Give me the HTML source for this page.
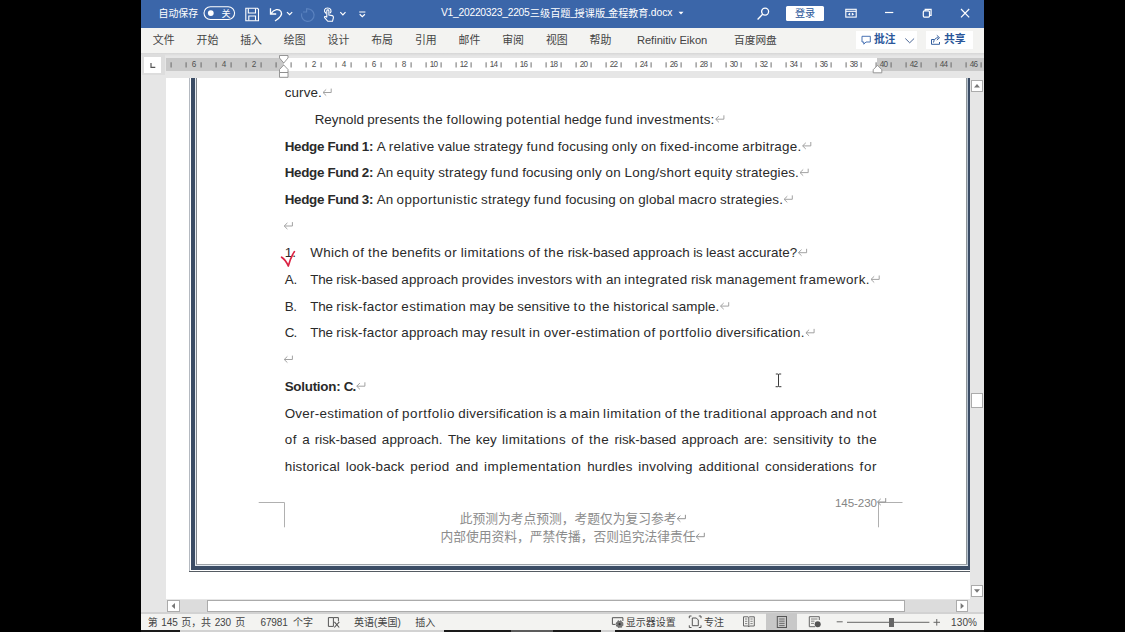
<!DOCTYPE html>
<html><head><meta charset="utf-8"><title>Word</title><style>
html,body{margin:0;padding:0;background:#000;}
body{width:1125px;height:632px;position:relative;overflow:hidden;font-family:"Liberation Sans",sans-serif;}
body>div{position:absolute;}
.t{white-space:pre;}
.bl{font-size:13.4px;line-height:19px;color:#2a2a2a;}
.bl span{display:inline-block;white-space:pre;word-spacing:0;}
.rn{font-size:8.2px;line-height:10px;text-align:center;color:#505050;letter-spacing:-0.8px;text-indent:-0.8px;}
svg{position:absolute;left:0;top:0;}
svg text{font-family:"Liberation Sans","Noto Sans CJK SC",sans-serif;}
</style></head>
<body>
<div style="left:141px;top:0px;width:843px;height:27.7px;background:#3b66a9;"></div>
<div style="left:141px;top:27.7px;width:843px;height:25.3px;background:#f3f3f1;"></div>
<div style="left:141px;top:53px;width:843px;height:559px;background:#e6e6e6;"></div>
<div style="left:141px;top:52.6px;width:843px;height:3.4px;background:#e6e6e6;background:linear-gradient(#d6d6d6,#e6e6e6);"></div>
<div style="left:166px;top:78px;width:804px;height:521px;background:#ffffff;"></div>
<div style="left:141px;top:612.5px;width:843px;height:19.5px;background:#f3f3f1;"></div>
<div style="left:141px;top:612px;width:843px;height:1.6px;background:#d2d2d2;"></div>
<div style="left:142px;top:53.6px;width:23px;height:21.6px;background:#dddddd;"></div>
<div style="left:144px;top:57px;width:17px;height:16px;background:#ffffff;"></div>
<div style="left:166px;top:58px;width:818px;height:12.6px;background:#c9c9c9;"></div>
<div style="left:283.6px;top:58px;width:593.4px;height:12.6px;background:#ffffff;"></div>
<div class="rn" style="left:184px;top:60.3px;width:20px">6</div>
<div class="rn" style="left:214px;top:60.3px;width:20px">4</div>
<div class="rn" style="left:244px;top:60.3px;width:20px">2</div>
<div class="rn" style="left:304px;top:60.3px;width:20px">2</div>
<div class="rn" style="left:334px;top:60.3px;width:20px">4</div>
<div class="rn" style="left:364px;top:60.3px;width:20px">6</div>
<div class="rn" style="left:394px;top:60.3px;width:20px">8</div>
<div class="rn" style="left:424px;top:60.3px;width:20px">10</div>
<div class="rn" style="left:454px;top:60.3px;width:20px">12</div>
<div class="rn" style="left:484px;top:60.3px;width:20px">14</div>
<div class="rn" style="left:514px;top:60.3px;width:20px">16</div>
<div class="rn" style="left:544px;top:60.3px;width:20px">18</div>
<div class="rn" style="left:574px;top:60.3px;width:20px">20</div>
<div class="rn" style="left:604px;top:60.3px;width:20px">22</div>
<div class="rn" style="left:634px;top:60.3px;width:20px">24</div>
<div class="rn" style="left:664px;top:60.3px;width:20px">26</div>
<div class="rn" style="left:694px;top:60.3px;width:20px">28</div>
<div class="rn" style="left:724px;top:60.3px;width:20px">30</div>
<div class="rn" style="left:754px;top:60.3px;width:20px">32</div>
<div class="rn" style="left:784px;top:60.3px;width:20px">34</div>
<div class="rn" style="left:814px;top:60.3px;width:20px">36</div>
<div class="rn" style="left:844px;top:60.3px;width:20px">38</div>
<div class="rn" style="left:874px;top:60.3px;width:20px">40</div>
<div class="rn" style="left:904px;top:60.3px;width:20px">42</div>
<div class="rn" style="left:934px;top:60.3px;width:20px">44</div>
<div class="rn" style="left:964px;top:60.3px;width:20px">46</div>
<div style="left:189.3px;top:78px;width:1px;height:494px;background:#b4b9c0;"></div>
<div style="left:191.2px;top:78px;width:3.7px;height:491.7px;background:#3b4c65;"></div>
<div style="left:194.9px;top:78px;width:1.2px;height:488.2px;background:#e6ebf1;"></div>
<div style="left:196.1px;top:78px;width:1px;height:487px;background:#80858b;"></div>
<div style="left:965.8px;top:78px;width:1px;height:487px;background:#8e9599;"></div>
<div style="left:966.8px;top:78px;width:1.2px;height:488.2px;background:#b4c1cf;"></div>
<div style="left:968px;top:78px;width:2px;height:491.7px;background:#3b4c65;"></div>
<div style="left:196.1px;top:564.1px;width:770.7px;height:0.9px;background:#9da2a7;"></div>
<div style="left:194.9px;top:565px;width:773.1px;height:1.2px;background:#e3e9f0;"></div>
<div style="left:191.2px;top:566.2px;width:778.8px;height:3.5px;background:#3b4c65;"></div>
<div style="left:189.3px;top:571px;width:780.7px;height:1px;background:#565c63;"></div>
<div style="left:970px;top:78px;width:14px;height:534px;background:#e6e6e6;"></div>
<div style="left:971px;top:80px;width:12px;height:12px;background:#ffffff;box-sizing:border-box;border:1px solid #ababab;"></div>
<div style="left:971px;top:585px;width:12px;height:12px;background:#ffffff;box-sizing:border-box;border:1px solid #ababab;"></div>
<div style="left:971px;top:393px;width:12px;height:14.5px;background:#ffffff;box-sizing:border-box;border:1px solid #ababab;"></div>
<div style="left:166px;top:599px;width:804px;height:13px;background:#e6e6e6;"></div>
<div style="left:180px;top:600px;width:776px;height:12px;background:#dcdcdc;"></div>
<div style="left:167px;top:600px;width:13px;height:12px;background:#ffffff;box-sizing:border-box;border:1px solid #ababab;"></div>
<div style="left:956px;top:600px;width:12px;height:12px;background:#ffffff;box-sizing:border-box;border:1px solid #ababab;"></div>
<div style="left:207px;top:600px;width:698px;height:12px;background:#ffffff;box-sizing:border-box;border:1px solid #ababab;"></div>
<div style="left:786.2px;top:5.7px;width:38px;height:15.6px;background:#ffffff;border-radius:1.5px;"></div>
<div style="left:855.6px;top:31.1px;width:61.6px;height:17.8px;background:#ffffff;"></div>
<div style="left:925.7px;top:31.1px;width:47.5px;height:17.8px;background:#ffffff;"></div>
<div style="left:766px;top:613px;width:31.3px;height:19px;background:#c8c8c8;"></div>
<div style="left:889.3px;top:618px;width:4.5px;height:9.3px;background:#666;"></div>
<div style="left:141px;top:629.9px;width:39px;height:2.1px;background:#1a1a1a;"></div>
<div style="left:180px;top:630.3px;width:264px;height:1.7px;background:#d2d2d2;"></div>
<div style="left:444px;top:629.9px;width:157px;height:2.1px;background:#1a1a1a;"></div>
<div style="left:511px;top:629.9px;width:42px;height:2.1px;background:#5c5c5c;"></div>
<div style="left:601px;top:630.3px;width:14px;height:1.7px;background:#d2d2d2;"></div>
<div style="left:615px;top:629.9px;width:369px;height:2.1px;background:#1a1a1a;"></div>
<div class="t bl" style="left:284.7px;top:83.16px;word-spacing:-0.350px"><span style="width:37.23px;letter-spacing:0.127px;">curve.</span></div>
<div class="t bl" style="left:314.7px;top:109.86px;word-spacing:-0.350px"><span style="width:49.18px;letter-spacing:0.006px;">Reynold</span> <span style="width:52.32px;letter-spacing:0.121px;">presents</span> <span style="width:20.23px;letter-spacing:0.536px;">the</span> <span style="width:56.01px;letter-spacing:0.434px;">following</span> <span style="width:54.89px;letter-spacing:0.472px;">potential</span> <span style="width:37.50px;letter-spacing:0.049px;">hedge</span> <span style="width:28.03px;letter-spacing:0.492px;">fund</span> <span style="width:78.16px;letter-spacing:0.249px;">investments:</span></div>
<div class="t bl" style="left:284.7px;top:136.56px;word-spacing:-0.350px"><span style="width:39.46px;letter-spacing:-0.295px;font-weight:700;">Hedge</span> <span style="width:30.83px;letter-spacing:-0.473px;font-weight:700;">Fund</span> <span style="width:11.66px;letter-spacing:-0.130px;font-weight:700;">1:</span> <span style="width:8.62px;letter-spacing:-0.316px;">A</span> <span style="width:45.72px;letter-spacing:0.318px;">relative</span> <span style="width:32.53px;letter-spacing:0.103px;">value</span> <span style="width:49.31px;letter-spacing:0.209px;">strategy</span> <span style="width:28.03px;letter-spacing:0.492px;">fund</span> <span style="width:50.62px;letter-spacing:0.093px;">focusing</span> <span style="width:25.85px;letter-spacing:0.318px;">only</span> <span style="width:15.69px;letter-spacing:0.390px;">on</span> <span style="width:78.95px;letter-spacing:0.252px;">fixed-income</span> <span style="width:59.09px;letter-spacing:0.251px;">arbitrage.</span></div>
<div class="t bl" style="left:284.7px;top:163.26px;word-spacing:-0.350px"><span style="width:39.46px;letter-spacing:-0.295px;font-weight:700;">Hedge</span> <span style="width:30.83px;letter-spacing:-0.473px;font-weight:700;">Fund</span> <span style="width:11.66px;letter-spacing:-0.130px;font-weight:700;">2:</span> <span style="width:16.45px;letter-spacing:0.030px;">An</span> <span style="width:38.22px;letter-spacing:0.415px;">equity</span> <span style="width:49.31px;letter-spacing:0.209px;">strategy</span> <span style="width:28.03px;letter-spacing:0.492px;">fund</span> <span style="width:50.62px;letter-spacing:0.093px;">focusing</span> <span style="width:25.85px;letter-spacing:0.318px;">only</span> <span style="width:15.69px;letter-spacing:0.390px;">on</span> <span style="width:66.42px;letter-spacing:0.314px;">Long/short</span> <span style="width:38.22px;letter-spacing:0.415px;">equity</span> <span style="width:62.99px;letter-spacing:0.110px;">strategies.</span></div>
<div class="t bl" style="left:284.7px;top:189.96px;word-spacing:-0.350px"><span style="width:39.46px;letter-spacing:-0.295px;font-weight:700;">Hedge</span> <span style="width:30.83px;letter-spacing:-0.473px;font-weight:700;">Fund</span> <span style="width:11.66px;letter-spacing:-0.130px;font-weight:700;">3:</span> <span style="width:16.45px;letter-spacing:0.030px;">An</span> <span style="width:81.17px;letter-spacing:0.403px;">opportunistic</span> <span style="width:49.31px;letter-spacing:0.209px;">strategy</span> <span style="width:28.03px;letter-spacing:0.492px;">fund</span> <span style="width:50.62px;letter-spacing:0.093px;">focusing</span> <span style="width:15.69px;letter-spacing:0.390px;">on</span> <span style="width:36.68px;letter-spacing:0.154px;">global</span> <span style="width:38.39px;letter-spacing:0.235px;">macro</span> <span style="width:62.99px;letter-spacing:0.110px;">strategies.</span></div>
<div class="t bl" style="left:284.7px;top:243.36px;word-spacing:-0.350px"><span style="width:11.31px;letter-spacing:0.071px;">1.</span></div>
<div class="t bl" style="left:310.3px;top:243.36px;word-spacing:-0.350px"><span style="width:38.63px;letter-spacing:0.283px;">Which</span> <span style="width:12.40px;letter-spacing:0.616px;">of</span> <span style="width:20.23px;letter-spacing:0.536px;">the</span> <span style="width:49.27px;letter-spacing:0.295px;">benefits</span> <span style="width:13.05px;letter-spacing:0.565px;">or</span> <span style="width:64.21px;letter-spacing:0.424px;">limitations</span> <span style="width:12.40px;letter-spacing:0.616px;">of</span> <span style="width:20.23px;letter-spacing:0.536px;">the</span> <span style="width:61.81px;letter-spacing:0.003px;">risk-based</span> <span style="width:57.11px;letter-spacing:0.159px;">approach</span> <span style="width:9.25px;letter-spacing:-0.212px;">is</span> <span style="width:28.79px;letter-spacing:0.098px;">least</span> <span style="width:59.21px;letter-spacing:0.044px;">accurate?</span></div>
<div class="t bl" style="left:284.7px;top:270.06px;word-spacing:-0.350px"><span style="width:12.38px;letter-spacing:-0.137px;">A.</span></div>
<div class="t bl" style="left:310.3px;top:270.06px;word-spacing:-0.350px"><span style="width:22.50px;letter-spacing:-0.192px;">The</span> <span style="width:61.81px;letter-spacing:0.003px;">risk-based</span> <span style="width:57.11px;letter-spacing:0.159px;">approach</span> <span style="width:52.10px;letter-spacing:0.184px;">provides</span> <span style="width:55.09px;letter-spacing:0.166px;">investors</span> <span style="width:26.89px;letter-spacing:0.765px;">with</span> <span style="width:14.97px;letter-spacing:0.030px;">an</span> <span style="width:63.23px;letter-spacing:0.367px;">integrated</span> <span style="width:21.22px;letter-spacing:0.097px;">risk</span> <span style="width:80.57px;letter-spacing:0.240px;">management</span> <span style="width:70.43px;letter-spacing:0.420px;">framework.</span></div>
<div class="t bl" style="left:284.7px;top:296.76px;word-spacing:-0.350px"><span style="width:11.87px;letter-spacing:-0.395px;">B.</span></div>
<div class="t bl" style="left:310.3px;top:296.76px;word-spacing:-0.350px"><span style="width:22.50px;letter-spacing:-0.192px;">The</span> <span style="width:61.80px;letter-spacing:0.275px;">risk-factor</span> <span style="width:64.79px;letter-spacing:0.376px;">estimation</span> <span style="width:25.78px;letter-spacing:0.157px;">may</span> <span style="width:15.24px;letter-spacing:0.168px;">be</span> <span style="width:52.87px;letter-spacing:0.085px;">sensitive</span> <span style="width:12.85px;letter-spacing:0.838px;">to</span> <span style="width:20.23px;letter-spacing:0.536px;">the</span> <span style="width:55.39px;letter-spacing:0.255px;">historical</span> <span style="width:47.29px;letter-spacing:0.057px;">sample.</span></div>
<div class="t bl" style="left:284.7px;top:323.46px;word-spacing:-0.350px"><span style="width:11.71px;letter-spacing:-0.850px;">C.</span></div>
<div class="t bl" style="left:310.3px;top:323.46px;word-spacing:-0.350px"><span style="width:22.50px;letter-spacing:-0.192px;">The</span> <span style="width:61.80px;letter-spacing:0.275px;">risk-factor</span> <span style="width:57.11px;letter-spacing:0.159px;">approach</span> <span style="width:25.78px;letter-spacing:0.157px;">may</span> <span style="width:34.67px;letter-spacing:0.321px;">result</span> <span style="width:11.25px;letter-spacing:0.405px;">in</span> <span style="width:96.54px;letter-spacing:0.333px;">over-estimation</span> <span style="width:12.40px;letter-spacing:0.616px;">of</span> <span style="width:52.97px;letter-spacing:0.592px;">portfolio</span> <span style="width:89.09px;letter-spacing:0.266px;">diversification.</span></div>
<div class="t bl" style="left:284.7px;top:376.86px;word-spacing:-0.350px"><span style="width:55.65px;letter-spacing:-0.263px;font-weight:700;">Solution:</span> <span style="width:11.87px;letter-spacing:-0.770px;font-weight:700;">C.</span></div>
<div class="t bl" style="left:284.7px;top:403.56px;word-spacing:-0.508px"><span style="width:98.55px;letter-spacing:0.269px;">Over-estimation</span> <span style="width:12.40px;letter-spacing:0.616px;">of</span> <span style="width:52.97px;letter-spacing:0.592px;">portfolio</span> <span style="width:85.33px;letter-spacing:0.281px;">diversification</span> <span style="width:9.25px;letter-spacing:-0.212px;">is</span> <span style="width:7.14px;letter-spacing:-0.316px;">a</span> <span style="width:30.29px;letter-spacing:0.314px;">main</span> <span style="width:58.39px;letter-spacing:0.554px;">limitation</span> <span style="width:12.40px;letter-spacing:0.616px;">of</span> <span style="width:20.23px;letter-spacing:0.536px;">the</span> <span style="width:63.22px;letter-spacing:0.469px;">traditional</span> <span style="width:57.11px;letter-spacing:0.159px;">approach</span> <span style="width:22.79px;letter-spacing:0.150px;">and</span> <span style="width:20.68px;letter-spacing:0.684px;">not</span></div>
<div class="t bl" style="left:284.7px;top:430.26px;word-spacing:1.541px"><span style="width:12.40px;letter-spacing:0.616px;">of</span> <span style="width:7.14px;letter-spacing:-0.316px;">a</span> <span style="width:61.81px;letter-spacing:0.003px;">risk-based</span> <span style="width:60.87px;letter-spacing:0.146px;">approach.</span> <span style="width:22.50px;letter-spacing:-0.192px;">The</span> <span style="width:20.93px;letter-spacing:0.029px;">key</span> <span style="width:64.21px;letter-spacing:0.424px;">limitations</span> <span style="width:12.40px;letter-spacing:0.616px;">of</span> <span style="width:20.23px;letter-spacing:0.536px;">the</span> <span style="width:61.81px;letter-spacing:0.003px;">risk-based</span> <span style="width:57.11px;letter-spacing:0.159px;">approach</span> <span style="width:23.73px;letter-spacing:0.164px;">are:</span> <span style="width:60.61px;letter-spacing:0.233px;">sensitivity</span> <span style="width:12.85px;letter-spacing:0.838px;">to</span> <span style="width:20.23px;letter-spacing:0.536px;">the</span></div>
<div class="t bl" style="left:284.7px;top:456.96px;word-spacing:2.073px"><span style="width:55.39px;letter-spacing:0.255px;">historical</span> <span style="width:58.51px;letter-spacing:0.133px;">look-back</span> <span style="width:39.54px;letter-spacing:0.385px;">period</span> <span style="width:22.79px;letter-spacing:0.150px;">and</span> <span style="width:97.35px;letter-spacing:0.467px;">implementation</span> <span style="width:45.34px;letter-spacing:0.203px;">hurdles</span> <span style="width:54.25px;letter-spacing:0.237px;">involving</span> <span style="width:60.87px;letter-spacing:0.352px;">additional</span> <span style="width:88.73px;letter-spacing:0.169px;">considerations</span> <span style="width:17.60px;letter-spacing:0.653px;">for</span></div>
<div class="t" style="left:441px;top:6.03px;font-size:10.3px;line-height:14px;color:#ffffff;letter-spacing:-0.265px;">V1_20220323_2205</div>
<div class="t" style="left:570.4px;top:6.03px;font-size:10.3px;line-height:14px;color:#ffffff;">_</div>
<div class="t" style="left:605px;top:6.03px;font-size:10.3px;line-height:14px;color:#ffffff;">_</div>
<div class="t" style="left:648px;top:6.03px;font-size:10.3px;line-height:14px;color:#ffffff;letter-spacing:-0.031px;">.docx</div>
<div class="t" style="left:636.9px;top:32.42px;font-size:11.2px;line-height:16px;color:#444444;letter-spacing:-0.035px;">Refinitiv Eikon</div>
<div class="t" style="left:835px;top:494.58px;font-size:11.6px;line-height:16px;color:#858585;letter-spacing:-0.094px;">145-230</div>
<div class="t" style="left:161.3px;top:615.63px;font-size:10.0px;line-height:14px;color:#444444;letter-spacing:-0.144px;">145</div>
<div class="t" style="left:214.7px;top:615.63px;font-size:10.0px;line-height:14px;color:#444444;letter-spacing:-0.194px;">230</div>
<div class="t" style="left:260.6px;top:615.63px;font-size:10.0px;line-height:14px;color:#444444;letter-spacing:-0.178px;">67981</div>
<div class="t" style="left:374px;top:615.63px;font-size:10.0px;line-height:14px;color:#444444;">(</div>
<div class="t" style="left:397.6px;top:615.63px;font-size:10.0px;line-height:14px;color:#444444;">)</div>
<div class="t" style="left:951px;top:615.63px;font-size:10.0px;line-height:14px;color:#444444;letter-spacing:0.141px;">130%</div>
<svg width="1125" height="632" viewBox="0 0 1125 632">
<path d="M151 63V67.4H155.3" fill="none" stroke="#555" stroke-width="1.2"/>
<path stroke="#606060" stroke-width="0.9" d="M171.1 62.3V67.5M186.1 62.3V67.5M201.1 62.3V67.5M216.1 62.3V67.5M231.1 62.3V67.5M246.1 62.3V67.5M261.1 62.3V67.5M276.1 62.3V67.5M291.1 62.3V67.5M306.1 62.3V67.5M321.1 62.3V67.5M336.1 62.3V67.5M351.1 62.3V67.5M366.1 62.3V67.5M381.1 62.3V67.5M396.1 62.3V67.5M411.1 62.3V67.5M426.1 62.3V67.5M441.1 62.3V67.5M456.1 62.3V67.5M471.1 62.3V67.5M486.1 62.3V67.5M501.1 62.3V67.5M516.1 62.3V67.5M531.1 62.3V67.5M546.1 62.3V67.5M561.1 62.3V67.5M576.1 62.3V67.5M591.1 62.3V67.5M606.1 62.3V67.5M621.1 62.3V67.5M636.1 62.3V67.5M651.1 62.3V67.5M666.1 62.3V67.5M681.1 62.3V67.5M696.1 62.3V67.5M711.1 62.3V67.5M726.1 62.3V67.5M741.1 62.3V67.5M756.1 62.3V67.5M771.1 62.3V67.5M786.1 62.3V67.5M801.1 62.3V67.5M816.1 62.3V67.5M831.1 62.3V67.5M846.1 62.3V67.5M861.1 62.3V67.5M876.1 62.3V67.5M891.1 62.3V67.5M906.1 62.3V67.5M921.1 62.3V67.5M936.1 62.3V67.5M951.1 62.3V67.5M966.1 62.3V67.5M981.1 62.3V67.5"/>
<g fill="#fff" stroke="#858585" stroke-width="0.85"><path d="M279.5 55.5H288V58L283.75 63L279.5 58Z"/><path d="M283.75 65L288 69.5V72.5H279.5V69.5Z"/><path d="M279.5 72.5H288V77.3H279.5Z"/><path d="M877.5 65.3L881.8 69.7V72.8H873.2V69.7Z"/></g>
<path d="M974 87.5L977 84L980 87.5Z" fill="#777"/>
<path d="M974 589.3L977 592.8L980 589.3Z" fill="#777"/>
<path d="M175 602.9L171.6 606L175 609.1Z" fill="#777"/>
<path d="M960.6 602.9L964 606L960.6 609.1Z" fill="#777"/>
<text x="158.5" y="16.6" font-size="9.9" fill="#ffffff">自动保存</text>
<rect x="204" y="6.7" width="30.6" height="12.8" rx="6.4" fill="none" stroke="#fff" stroke-width="1.1"/><circle cx="210.8" cy="13.1" r="2.9" fill="#fff"/>
<text x="221.5" y="16.5" font-size="9" fill="#ffffff">关</text>
<g fill="none" stroke="#fff" stroke-width="1.1"><path d="M245.8 8.3H257.5L258.5 9.3V20.8H245.8Z"/><path d="M248.3 8.5V13H255.5V8.5"/><path d="M248.8 20.5V16H255.5V20.5"/></g>
<g fill="none" stroke="#fff" stroke-width="1.3"><path d="M270.5 8.3V14H276.2"/><path d="M270.8 13.8C274 9 279 8.5 281 11.5C283 15 279 18.5 275 21"/></g>
<path d="M287 12.1L289.6 14.7L292.2 12.1" fill="none" stroke="#fff" stroke-width="1.2"/>
<g fill="none" stroke="#5a82bf" stroke-width="1.2"><path d="M306.6 8.9A6.3 6.3 0 1 1 301.7 13.4"/><path d="M306.6 8.2V12H303"/></g>
<g fill="none" stroke="#fff" stroke-width="1.1"><path d="M326.3 13.5C323 11 324.5 8 327.5 8C331 8 332 11 330 13.2"/><path d="M326.8 17.5V10.8C326.8 9.6 328.9 9.6 328.9 10.8V15L332.2 15.6C333.4 15.9 333.6 17 333.3 18.2L332.5 21.3H327.8L324.6 17.6C324 16.6 325.4 15.8 326.8 17.5"/></g>
<path d="M340.3 12.2L342.9 14.8L345.5 12.2" fill="none" stroke="#fff" stroke-width="1.2"/>
<path d="M359.2 12H365.4M359.7 14.2L362.3 16.7L364.9 14.2" fill="none" stroke="#fff" stroke-width="1.2"/>
<text x="529.8" y="16.7" font-size="10.2" fill="#ffffff">三级百题</text>
<text x="574.6" y="16.7" font-size="10.2" fill="#ffffff">授课版</text>
<text x="608.3" y="16.7" font-size="10" fill="#ffffff">金程教育</text>
<path d="M678.5 11.8H683.5L681 14.6Z" fill="#fff"/>
<g fill="none" stroke="#fff" stroke-width="1.3"><circle cx="765.1" cy="11.6" r="3.5"/><path d="M762.6 14.2L757.6 19.5"/></g>
<text x="795" y="17.2" font-size="10.1" fill="#2b579a">登录</text>
<g fill="none" stroke="#fff" stroke-width="1.1"><rect x="845.8" y="9.3" width="10.4" height="7.8"/><path d="M845.8 11.3H856.2"/></g><path d="M847.8 14.2L850.2 12.6V15.8ZM854.2 14.2L851.8 12.6V15.8Z" fill="#fff"/>
<g fill="none" stroke="#fff" stroke-width="1.2"><path d="M885 12.5H893.3"/><rect x="923.3" y="10.9" width="6.2" height="6.2" rx="1"/><path d="M925.2 10.7V9.4H931.1V15.3H929.8"/><path d="M961 9L969.2 17.4M969.2 9L961 17.4"/></g>
<g fill="#444444" font-size="10.9">
<text x="152.8" y="44.4">文件</text>
<text x="196.5" y="44.4">开始</text>
<text x="240.2" y="44.4">插入</text>
<text x="283.8" y="44.4">绘图</text>
<text x="327.5" y="44.4">设计</text>
<text x="371.2" y="44.4">布局</text>
<text x="414.9" y="44.4">引用</text>
<text x="458.6" y="44.4">邮件</text>
<text x="502.2" y="44.4">审阅</text>
<text x="545.9" y="44.4">视图</text>
<text x="589.6" y="44.4">帮助</text>
</g>
<text x="734" y="44.4" font-size="10.7" fill="#444444">百度网盘</text>
<path d="M862 36.3H870.3V42H866L863.8 44.2V42H862Z" fill="none" stroke="#3f6cb0" stroke-width="0.95"/>
<text x="874" y="43.3" font-size="10.8" font-weight="700" fill="#2b579a">批注</text>
<path d="M905.3 38.5L909.7 42.8L914.1 38.5" fill="none" stroke="#4b6796" stroke-width="1"/>
<g fill="none" stroke="#2b579a" stroke-width="0.95"><path d="M934 39.5H931.5V44.3H939.5V42"/><path d="M933.5 42.5C934 39 936 37.7 938.3 37.7M936.8 35.3L939.5 37.7L936.8 40.2"/></g>
<text x="944" y="43.3" font-size="10.8" font-weight="700" fill="#2b579a">共享</text>
<g fill="none" stroke="#9d9d9d" stroke-width="0.95"><path d="M292.4 222.1V226H284.4"/><path d="M287.4 222.9L284.2 226L287.4 229.1"/></g>
<g fill="none" stroke="#9d9d9d" stroke-width="0.95"><path d="M292.4 355.6V359.5H284.4"/><path d="M287.4 356.4L284.2 359.5L287.4 362.6"/></g>
<path d="M281.6 257.2C284.5 259 286.8 262.5 288.3 266C289.8 260.5 291.8 255.5 294.4 251.6" fill="none" stroke="#db2243" stroke-width="1.7" stroke-linecap="round" stroke-linejoin="round"/>
<path d="M775.8 374H777.8Q778.5 374 778.5 375V385.7Q778.5 386.7 777.8 386.7H775.6M781.2 374H779.2Q778.5 374 778.5 375M778.5 385.7Q778.5 386.7 779.2 386.7H781.4" fill="none" stroke="#3a3a3a" stroke-width="1"/>
<path d="M258.7 502.5H284.5V527.3M902.5 502.5H878.5V527.3" fill="none" stroke="#b0b0b0" stroke-width="1"/>
<text x="459.7" y="522.6" font-size="12.75" fill="#8c8c8c">此预测为考点预测，考题仅为复习参考</text>
<g fill="none" stroke="#8c8c8c" stroke-width="0.95"><path d="M685.4 514.8V518.7H677.4"/><path d="M680.4 515.6L677.2 518.7L680.4 521.8"/></g>
<text x="440.4" y="540.6" font-size="12.75" fill="#8c8c8c">内部使用资料，严禁传播，否则追究法律责任</text>
<g fill="none" stroke="#8c8c8c" stroke-width="0.95"><path d="M704.3 532.8V536.7H696.3"/><path d="M699.3 533.6L696.1 536.7L699.3 539.8"/></g>
<g fill="none" stroke="#8c8c8c" stroke-width="0.95"><path d="M885.7 498.1V502H877.7"/><path d="M880.7 498.9L877.5 502L880.7 505.1"/></g>
<g fill="#444444" font-size="10">
<text x="147.8" y="626.2">第</text>
<text x="181.2" y="626.2">页，</text>
<text x="200.9" y="626.2">共</text>
<text x="235.2" y="626.2">页</text>
<text x="293" y="626.2">个字</text>
</g>
<g fill="none" stroke="#555" stroke-width="1"><path d="M333.4 617.6H328.4V626.4H333.4V617.6H338.4V621.3"/><path d="M334.4 621.9L339.2 627.5M339.3 621.9L334.3 627.5" stroke-width="1.1"/></g>
<g fill="#444444" font-size="10">
<text x="354" y="626.2">英语</text>
<text x="377.6" y="626.2">美国</text>
<text x="415.2" y="626.2">插入</text>
</g>
<path d="M615.6 624.4H612.4V617.7H622.9V621" fill="none" stroke="#555" stroke-width="1"/><circle cx="619.6" cy="624.2" r="3.2" fill="#777"/><circle cx="619.6" cy="624.2" r="3.3" fill="none" stroke="#666" stroke-width="1.2" stroke-dasharray="1.5 1.1"/><circle cx="619.6" cy="624.2" r="1.1" fill="#333"/>
<text x="625.8" y="626.2" font-size="10" fill="#444444">显示器设置</text>
<g fill="none" stroke="#555" stroke-width="1"><path d="M691.5 616H689.3V618.2M698.8 616H701V618.2M691.5 627.5H689.3V625.3M698.8 627.5H701V625.3"/><path d="M692.3 618H696.3L698.3 620V625.7H692.3Z"/></g>
<text x="704" y="626.2" font-size="10" fill="#444444">专注</text>
<g fill="none" stroke="#666" stroke-width="1"><path d="M748.8 617.5V627M743.5 616.8H748L748.8 617.5L749.6 616.8H754.3V626H749.6L748.8 626.8L748 626H743.5Z"/><path d="M745 619H747.3M745 621.3H747.3M745 623.6H747.3M750.4 619H752.7M750.4 621.3H752.7M750.4 623.6H752.7" stroke-width="0.8"/></g>
<g fill="none" stroke="#555" stroke-width="1"><rect x="777.3" y="616.5" width="9.2" height="11"/><path d="M779.2 619H784.6M779.2 621.2H784.6M779.2 623.4H784.6M779.2 625.6H784.6" stroke-width="0.8"/></g>
<g fill="none" stroke="#666" stroke-width="1"><path d="M815 626.7H809.3V616.7H819.3V620"/><path d="M811 619H817.5M811 621.2H814.5M811 623.4H814" stroke-width="0.8"/></g><circle cx="817.7" cy="624.3" r="3" fill="#555"/>
<path d="M836.7 621.8H842.7M847 622.3H929.4M933.5 622.3H940M936.75 619V625.6" stroke="#666" stroke-width="1" fill="none"/>
<g fill="none" stroke="#9d9d9d" stroke-width="0.95"><path d="M331.2 88.6V92.5H323.2"/><path d="M326.2 89.4L323 92.5L326.2 95.6"/></g>
<g fill="none" stroke="#9d9d9d" stroke-width="0.95"><path d="M723.9 115.3V119.2H715.9"/><path d="M718.9 116.1L715.7 119.2L718.9 122.3"/></g>
<g fill="none" stroke="#9d9d9d" stroke-width="0.95"><path d="M810.8 142V145.9H802.8"/><path d="M805.8 142.8L802.6 145.9L805.8 149"/></g>
<g fill="none" stroke="#9d9d9d" stroke-width="0.95"><path d="M808.2 168.7V172.6H800.2"/><path d="M803.2 169.5L800 172.6L803.2 175.7"/></g>
<g fill="none" stroke="#9d9d9d" stroke-width="0.95"><path d="M792.3 195.4V199.3H784.3"/><path d="M787.3 196.2L784.1 199.3L787.3 202.4"/></g>
<g fill="none" stroke="#9d9d9d" stroke-width="0.95"><path d="M806.6 248.8V252.7H798.6"/><path d="M801.6 249.6L798.4 252.7L801.6 255.8"/></g>
<g fill="none" stroke="#9d9d9d" stroke-width="0.95"><path d="M879.2 275.5V279.4H871.2"/><path d="M874.2 276.3L871 279.4L874.2 282.5"/></g>
<g fill="none" stroke="#9d9d9d" stroke-width="0.95"><path d="M728.7 302.2V306.1H720.7"/><path d="M723.7 303L720.5 306.1L723.7 309.2"/></g>
<g fill="none" stroke="#9d9d9d" stroke-width="0.95"><path d="M814.1 328.9V332.8H806.1"/><path d="M809.1 329.7L805.9 332.8L809.1 335.9"/></g>
<g fill="none" stroke="#9d9d9d" stroke-width="0.95"><path d="M364.9 382.3V386.2H356.9"/><path d="M359.9 383.1L356.7 386.2L359.9 389.3"/></g>
</svg>
</body></html>
